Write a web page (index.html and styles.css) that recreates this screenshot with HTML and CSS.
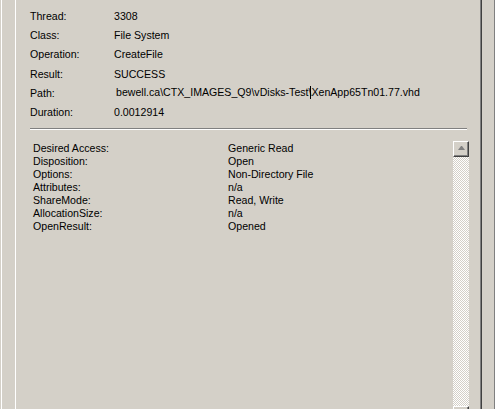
FILE: index.html
```html
<!DOCTYPE html>
<html>
<head>
<meta charset="utf-8">
<link rel="stylesheet" href="styles.css">
</head>
<body>
<div class="window">
  <div class="page">
    <div class="props">
      <div class="lbl">Thread:</div><div class="val">3308</div>
      <div class="lbl">Class:</div><div class="val">File System</div>
      <div class="lbl">Operation:</div><div class="val">CreateFile</div>
      <div class="lbl">Result:</div><div class="val">SUCCESS</div>
      <div class="lbl">Path:</div><div class="val path">bewell.ca\CTX_IMAGES_Q9\vDisks-Test\<span class="caret"></span>XenApp65Tn01.77.vhd</div>
      <div class="lbl">Duration:</div><div class="val">0.0012914</div>
    </div>
    <div class="sep"></div>
    <div class="detail">
      <div class="list">
        <div>Desired Access:</div><div>Generic Read</div>
        <div>Disposition:</div><div>Open</div>
        <div>Options:</div><div>Non-Directory File</div>
        <div>Attributes:</div><div>n/a</div>
        <div>ShareMode:</div><div>Read, Write</div>
        <div>AllocationSize:</div><div>n/a</div>
        <div>OpenResult:</div><div>Opened</div>
      </div>
      <div class="scroll">
        <div class="btn"><span class="tri-up"></span></div>
        <div class="track"></div>
        <div class="btn"><span class="tri-down"></span></div>
      </div>
    </div>
  </div>
</div>
</body>
</html>
```

FILE: styles.css
```css
html, body {
  margin: 0;
  height: 100%;
  overflow: hidden;
}
body {
  background: #d4d0c8;
  font-family: "Liberation Sans", Arial, sans-serif;
  font-size: 10.6px;
  color: #000;
}
.window {
  margin-left: 1px;
  height: 409px;
  box-sizing: border-box;
  border-left: 1px solid #fff;
  border-right: 1px solid #808080;
  padding: 0 12px 0 13px;
  display: flex;
}
.page {
  flex: 1;
  border-left: 1px solid #fff;
  border-right: 1px solid #404040;
  box-shadow: inset -1px 0 #808080;
  padding: 6px 14px 0 14px;
  display: flex;
  flex-direction: column;
}
.props {
  display: grid;
  grid-template-columns: 84px 1fr;
  grid-auto-rows: 19.33px;
  align-items: center;
  white-space: nowrap;
}
.path {
  padding-left: 2px;
}
.caret {
  display: inline-block;
  width: 1px;
  height: 13px;
  background: #000;
  vertical-align: -3px;
  margin-left: -1px;
  margin-right: 0;
}
.sep {
  height: 1px;
  background: #808080;
  border-bottom: 1px solid #fff;
  margin-top: 6px;
  flex: none;
}
.detail {
  display: flex;
  margin-top: 11px;
  margin-right: -2px;
}
.list {
  flex: 1;
  padding-left: 3px;
  padding-top: 1px;
  display: grid;
  grid-template-columns: 195px 1fr;
  grid-auto-rows: 13px;
  align-content: start;
  line-height: 13px;
  white-space: nowrap;
}
.scroll {
  width: 16px;
  display: flex;
  flex-direction: column;
  flex: none;
}
.btn {
  height: 16px;
  box-sizing: border-box;
  border: 1px solid;
  border-color: #fff #404040 #404040 #fff;
  box-shadow: inset -1px -1px #808080;
  background: #d4d0c8;
  display: flex;
  align-items: center;
  justify-content: center;
}
.tri-up {
  width: 1px;
  height: 0;
  border-left: 3px solid transparent;
  border-right: 3px solid transparent;
  border-bottom: 4px solid #808080;
  margin-top: -1px;
}
.tri-down {
  width: 1px;
  height: 0;
  border-left: 3px solid transparent;
  border-right: 3px solid transparent;
  border-top: 4px solid #808080;
}
.track {
  height: 249px;
  background: repeating-conic-gradient(#fff 0 25%, #d4d0c8 0 50%);
  background-size: 2px 2px;
}
```
